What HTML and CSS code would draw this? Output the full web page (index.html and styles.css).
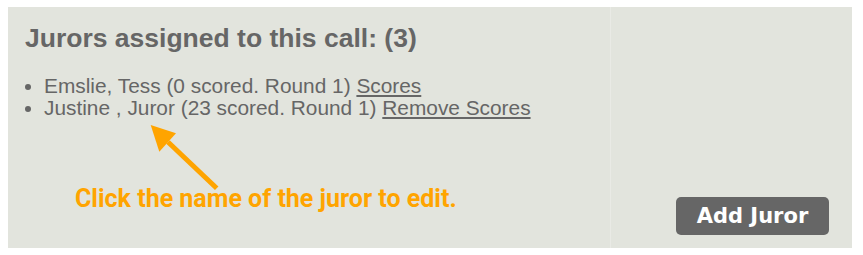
FILE: index.html
```html
<!DOCTYPE html>
<html>
<head>
<meta charset="utf-8">
<link rel="stylesheet" href="styles.css">
</head>
<body>
<div class="wrap">
  <div class="panel">
    <div class="main">
      <h2 class="title">Jurors assigned to this call: (3)</h2>
      <ul class="jurors">
        <li>Emslie, Tess (0 scored. Round 1) <a href="#" class="lnk">Scores</a></li>
        <li>Justine , Juror (23 scored. Round 1) <a href="#" class="lnk">Remove Scores</a></li>
      </ul>
      <p class="hint">Click the name of the juror to edit.</p>
    </div>
    <div class="side">
      <a href="#" class="btn">Add Juror</a>
    </div>
    <svg class="arrow" width="220" height="190" viewBox="0 0 220 190">
      <line x1="160" y1="135" x2="208.7" y2="181.3" stroke="#ffa400" stroke-width="5" stroke-linecap="butt"/>
      <polygon points="142.7,118 168,126.3 151.3,144.7" fill="#ffa400"/>
    </svg>
  </div>
</div>
</body>
</html>
```
FILE: styles.css
```css
html, body {
  margin: 0;
  padding: 0;
  background: #ffffff;
}
.wrap {
  padding: 7px 0 0 8px;
}
.panel {
  position: relative;
  width: 844px;
  height: 241px;
  background: #e2e4dd;
  display: flex;
}
.main {
  width: 603px;
  border-right: 1px solid #e9eae5;
  padding: 15.5px 0 0 17px;
  box-sizing: border-box;
}
.title {
  margin: 0;
  font-family: "Liberation Sans", Arial, sans-serif;
  font-weight: bold;
  font-size: 26.5px;
  line-height: 30px;
  color: #666666;
}
.jurors {
  margin: 22.4px 0 0 0;
  padding: 0 0 0 19px;
  font-family: "Liberation Sans", Arial, sans-serif;
  font-size: 20.85px;
  line-height: 22px;
  color: #666666;
}
.lnk {
  color: #666666;
  text-decoration: underline;
}
.hint {
  margin: 66.5px 0 0 50px;
  font-family: Roboto, sans-serif;
  font-weight: bold;
  font-size: 25px;
  line-height: 28px;
  color: #ffa400;
}
.side {
  flex: 1;
  display: flex;
  align-items: flex-end;
  justify-content: flex-end;
  padding: 0 23px 13px 0;
}
.btn {
  display: flex;
  align-items: center;
  justify-content: center;
  width: 153px;
  height: 38px;
  border-radius: 5px;
  background: #666666;
  color: #ffffff;
  font-family: "DejaVu Sans", Verdana, sans-serif;
  font-weight: bold;
  font-size: 21px;
  text-decoration: none;
}
.arrow {
  position: absolute;
  left: 0;
  top: 0;
}
```
